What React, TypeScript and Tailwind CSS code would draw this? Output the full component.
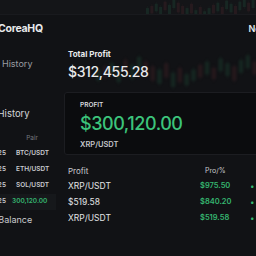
import { History } from 'lucide-react';

const candles = [
  [0, 30, 44, 1], [6, 26, 40, 0], [12, 22, 36, 1], [18, 28, 46, 1], [24, 18, 34, 0],
  [30, 24, 42, 1], [36, 14, 30, 1], [42, 20, 38, 0], [48, 26, 44, 0], [54, 30, 48, 1],
  [60, 22, 40, 0], [66, 34, 52, 1], [72, 28, 46, 0], [78, 36, 50, 1], [84, 30, 44, 1],
  [90, 24, 40, 0], [96, 20, 36, 1], [102, 28, 42, 0], [108, 16, 32, 1], [114, 22, 38, 1],
  [120, 26, 44, 0], [126, 18, 34, 1], [132, 12, 28, 1], [138, 20, 36, 0], [144, 14, 30, 1],
];

function Candles({ className }: { className?: string }) {
  return (
    <svg className={className} viewBox="0 0 150 56" preserveAspectRatio="none">
      {candles.map(([x, y1, y2, up], i) => (
        <g key={i} opacity={0.16}>
          <line x1={x + 2} x2={x + 2} y1={y1 - 4} y2={y2 + 4} stroke={up ? '#2f8a5c' : '#8a3c42'} strokeWidth={0.6} />
          <rect x={x} y={y1} width={4} height={y2 - y1} fill={up ? '#2f8a5c' : '#8a3c42'} />
        </g>
      ))}
    </svg>
  );
}

const sideRows = [
  { date: '12.25', pair: 'BTC/USDT' },
  { date: '12.25', pair: 'ETH/USDT' },
  { date: '12.25', pair: 'SOL/USDT' },
];

const tradeRows = [
  { pair: 'XRP/USDT', profit: '$975.50' },
  { pair: '$519.58', profit: '$840.20' },
  { pair: 'XRP/USDT', profit: '$519.58' },
];

export default function App() {
  return (
    <div
      className="w-[256px] h-[256px] overflow-hidden bg-[#111215] text-[#e8e9eb] flex flex-col"
      style={{ fontFamily: 'Inter, "Noto Sans", sans-serif' }}
    >
      <div className="h-[15px] shrink-0 bg-[#141518] border-b border-[#191a1e] overflow-hidden flex justify-end">
        <Candles className="w-[110px] h-[30px] -mt-[8px] blur-[0.6px]" />
      </div>

      <header className="h-[27px] shrink-0 flex items-center justify-between">
        <span className="-ml-[2px] text-[10.5px] font-bold tracking-tight">CoreaHQ</span>
        <span className="-mr-[12px] text-[9px] font-semibold">New</span>
      </header>

      <div className="flex flex-1 min-h-0">
        <aside className="w-[56px] shrink-0 overflow-hidden">
          <div className="h-[44px] flex items-center gap-[4px] -ml-[13px] text-[9px] text-[#9a9da3]">
            <History className="w-[11px] h-[11px]" />
            <span>History</span>
          </div>
          <div className="mt-[19px] h-[18px] flex items-center -ml-[31px] text-[9.5px] text-[#d4d6d9] whitespace-nowrap">
            Trade History
          </div>
          <div className="mt-[9px] h-[14px] flex items-center -ml-[28px] text-[6.5px] text-[#74777d]">
            <span className="w-[34px]" />
            <span className="w-[30px] ml-[10px] text-right pr-[8px]">Pair</span>
          </div>
          {sideRows.map((r, i) => (
            <div key={i} className="h-[16px] flex items-center -ml-[28px] text-[6.5px] font-semibold text-[#c9cbcf] whitespace-nowrap">
              <span className="w-[34px] text-right">{r.date}</span>
              <span className="ml-[10px]">{r.pair}</span>
            </div>
          ))}
          <div className="h-[16px] flex items-center -ml-[28px] text-[6.5px] font-semibold whitespace-nowrap bg-[#16181b]">
            <span className="w-[34px] text-right text-[#c9cbcf]">12.25</span>
            <span className="ml-[6px] text-[#35b56f]">300,120.00</span>
          </div>
          <div className="h-[20px] flex items-center -ml-[25px] text-[9px] text-[#c9cbcf] whitespace-nowrap">
            Total Balance
          </div>
        </aside>

        <main className="flex-1 min-w-0 relative">
          <Candles className="absolute left-[40px] top-[4px] w-[170px] h-[44px] blur-[0.8px]" />
          <div className="relative pl-[12px] pt-[6px]">
            <div className="h-[12px] flex items-center text-[8px] font-bold">Total Profit</div>
            <div className="mt-[2px] h-[18px] flex items-center text-[14px] font-medium tracking-tight">$312,455.28</div>
          </div>

          <div className="relative mt-[12px] ml-[8px] -mr-[20px] h-[63px] bg-[#0b0c0e] border border-[#1c1d21] rounded-[3px] pl-[15px] flex flex-col">
            <div className="mt-[8px] h-[10px] flex items-center text-[6.5px] font-semibold text-[#d8dadd]">PROFIT</div>
            <div className="mt-[2px] h-[20px] flex items-center text-[18px] font-medium text-[#3cc47b] tracking-tight">$300,120.00</div>
            <div className="mt-[6px] h-[12px] flex items-center text-[7.5px] font-semibold text-[#c4c6ca]">XRP/USDT</div>
          </div>

          <div className="mt-[9px] pl-[12px]">
            <div className="h-[14px] flex items-center text-[8px] text-[#c9cbcf]">
              <span className="w-[137px]">Profit</span>
              <span className="w-[24px] text-[7px]">Pro/%</span>
            </div>
            {tradeRows.map((r, i) => (
              <div key={i} className="h-[16px] flex items-center">
                <span className="w-[132px] text-[8.5px] text-[#e3e4e6]">{r.pair}</span>
                <span className="w-[50px] text-[7.5px] font-semibold text-[#35b56f]">{r.profit}</span>
                <span className="text-[8px] text-[#35b56f]">•</span>
              </div>
            ))}
          </div>
        </main>
      </div>
    </div>
  );
}
